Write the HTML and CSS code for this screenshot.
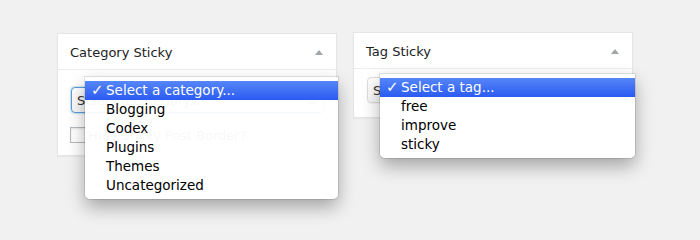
FILE: index.html
```html
<!DOCTYPE html>
<html>
<head>
<meta charset="utf-8">
<link rel="stylesheet" href="styles.css">
</head>
<body>
<div class="wrap">
  <div class="box box-cat">
    <div class="box-head">
      <h2 class="box-title">Category Sticky</h2>
      <span class="toggle"></span>
    </div>
    <div class="box-body cat-body">
      <div class="select focus">
        <span>Select a category...</span>
        <svg class="arrow" width="8" height="12" viewBox="0 0 8 12"><path d="M1 4.5 L4 1.5 L7 4.5 M1 7.5 L4 10.5 L7 7.5" fill="none" stroke="#555" stroke-width="1.3"/></svg>
      </div>
      <label class="check"><span class="cb"></span><span class="check-label">Hide Sticky Post Border?</span></label>
    </div>
    <ul class="menu menu-cat">
      <li class="sel"><span class="tick">✓</span>Select a category...</li>
      <li>Blogging</li>
      <li>Codex</li>
      <li>Plugins</li>
      <li>Themes</li>
      <li>Uncategorized</li>
    </ul>
  </div>
  <div class="box box-tag">
    <div class="box-head">
      <h2 class="box-title">Tag Sticky</h2>
      <span class="toggle"></span>
    </div>
    <div class="box-body tag-body">
      <div class="select">
        <span>Select a tag...</span>
        <svg class="arrow" width="8" height="12" viewBox="0 0 8 12"><path d="M1 4.5 L4 1.5 L7 4.5 M1 7.5 L4 10.5 L7 7.5" fill="none" stroke="#555" stroke-width="1.3"/></svg>
      </div>
    </div>
    <ul class="menu menu-tag">
      <li class="sel"><span class="tick">✓</span>Select a tag...</li>
      <li>free</li>
      <li>improve</li>
      <li>sticky</li>
    </ul>
  </div>
</div>
</body>
</html>
```

FILE: styles.css
```css
html, body {
  margin: 0;
  padding: 0;
  height: 100%;
  background: #f1f1f1;
  font-family: "DejaVu Sans", "Liberation Sans", sans-serif;
}

.wrap {
  display: flex;
  align-items: flex-start;
  gap: 16px;
  padding: 32px 0 0 57px;
  min-height: 229px;
  box-sizing: border-box;
}

.box {
  position: relative;
  width: 280px;
  box-sizing: border-box;
  background: #fff;
  border: 1px solid #e5e5e5;
  box-shadow: 0 1px 1px rgba(0, 0, 0, 0.04);
}

.box-cat {
  margin-top: 1px;
}

.box-head {
  height: 35px;
  border-bottom: 1px solid #eee;
  display: flex;
  align-items: center;
  justify-content: space-between;
  padding: 0 13px 0 12px;
}

.box-title {
  margin: 0;
  font-size: 13px;
  font-weight: normal;
  color: #222;
  line-height: 1;
  padding-top: 1px;
}

.toggle {
  width: 0;
  height: 0;
  border-left: 4px solid transparent;
  border-right: 4px solid transparent;
  border-bottom: 5px solid #a0a5aa;
  margin-top: 1px;
}

.cat-body {
  padding: 17px 11px 12px 12px;
}

.tag-body {
  padding: 8px 11px 14px 13px;
}

.select {
  height: 26px;
  box-sizing: border-box;
  border: 1px solid #ddd;
  border-radius: 4px;
  background: linear-gradient(#fff, #f7f7f7);
  display: flex;
  align-items: center;
  justify-content: space-between;
  padding: 0 8px 0 5px;
  font-size: 13px;
  color: #333;
  box-shadow: 0 1px 1px rgba(0, 0, 0, 0.05);
}

.cat-body .select {
  margin-left: 1px;
  margin-bottom: 14px;
}

.select.focus {
  border-color: #5b9dd9;
  box-shadow: 0 0 2px rgba(30, 140, 190, 0.8);
}

.check {
  display: flex;
  align-items: center;
  height: 16px;
  gap: 2px;
  font-size: 13px;
  color: #444;
}

.cb {
  width: 16px;
  height: 16px;
  box-sizing: border-box;
  border: 1px solid #b4b9be;
  background: #fff;
  box-shadow: inset 0 1px 2px rgba(0, 0, 0, 0.1);
}

.menu {
  position: absolute;
  z-index: 5;
  margin: 0;
  padding: 4px 0;
  list-style: none;
  background: rgba(255, 255, 255, 0.96);
  border-radius: 0 0 5px 5px;
  box-shadow: 0 0 0 1px rgba(0, 0, 0, 0.1), 0 8px 18px rgba(0, 0, 0, 0.32);
  font-size: 13.5px;
  color: #000;
}

.menu-cat {
  left: 27px;
  top: 43px;
  width: 253px;
}

.menu-tag {
  left: 26px;
  top: 41px;
  width: 255px;
}

.menu li {
  position: relative;
  height: 19px;
  line-height: 19px;
  padding-left: 21px;
  white-space: nowrap;
}

.menu li.sel {
  background: linear-gradient(#5686f8, #2a5bf1);
  color: #fff;
}

.tick {
  position: absolute;
  left: 6px;
  top: 0;
  font-size: 15px;
  font-weight: bold;
}
```
